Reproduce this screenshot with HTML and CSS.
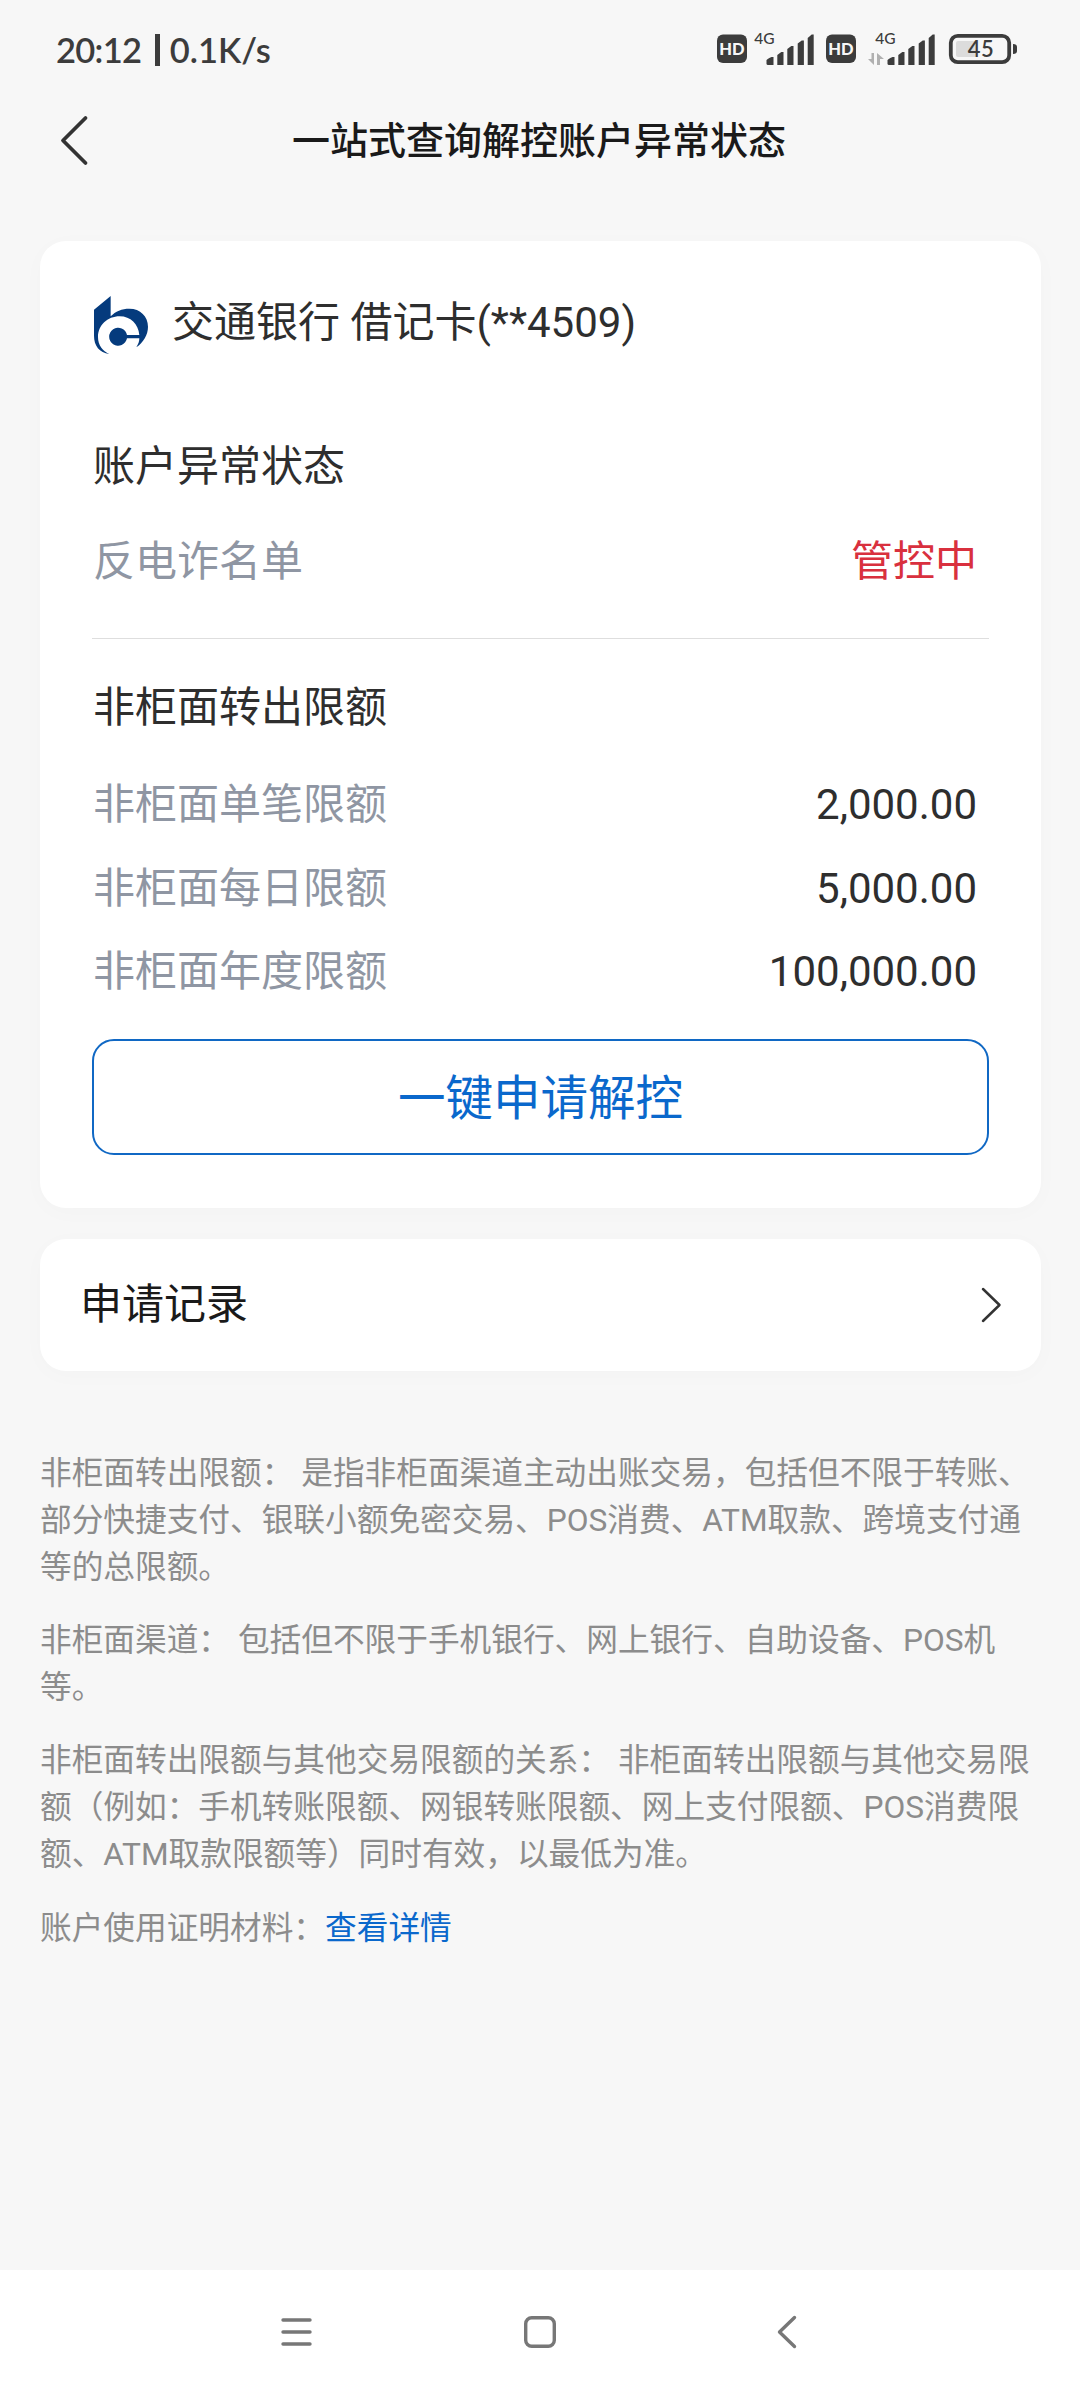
FILE: index.html
```html
<!DOCTYPE html>
<html lang="zh-CN">
<head>
<meta charset="utf-8">
<title>一站式查询解控账户异常状态</title>
<link rel="stylesheet" href="styles.css">
</head>
<body>
<div class="screen">
  <div class="status-bar">
    <div class="status-left"><span class="clock">20:12</span><i class="sep"></i><span class="speed">0.1K/s</span></div>
    <svg class="status-icons" width="310" height="40" viewBox="0 0 310 40">
      <g fill="#3c3c3c">
        <rect x="0" y="4.5" width="30" height="28.5" rx="6"/>
        <rect x="109" y="4.5" width="30" height="28.5" rx="6"/>
        <g id="bars">
          <path d="M49.500 33.500v-3q0-1.500 5-3.500h2v8h-5.500q-1.500 0-1.500-1.500z"/>
          <path d="M60.300 35v-10l4-3h2.200v13z"/>
          <path d="M70.300 35v-16l4-3h2.200v19z"/>
          <path d="M80.700 35v-21.500l4-3h2.200v24.500z"/>
          <path d="M90.700 35v-27l4-3.500h2v30.500z"/>
        </g>
        <use href="#bars" x="121"/>
        <path d="M296 14q4 0 4 3v4q0 3-4 3z"/>
      </g>
      <g class="hd"><text x="15" y="24.500">HD</text><text x="124" y="24.500">HD</text></g>
      <g class="net"><text x="47.500" y="14">4G</text><text x="168.500" y="14">4G</text></g>
      <path d="M157 23v12l-6-6h3.500v-6zM160 35v-12l7 6h-4v6z" fill="#b0b0b0"/>
      <rect x="233.800" y="5.800" width="58.400" height="26.400" rx="7" fill="none" stroke="#3c3c3c" stroke-width="3.800"/>
      <rect x="239" y="11" width="21" height="16" rx="2" fill="#dcdcdc"/>
      <text class="battery" x="264" y="26.700">45</text>
    </svg>
  </div>

  <header class="nav-bar">
    <svg class="back" width="32" height="54" viewBox="0 0 32 54"><path d="M27.500 5L5 27.500l22.500 22.500" fill="none" stroke="#333" stroke-width="3.800" stroke-linecap="round" stroke-linejoin="round"/></svg>
    <h1 class="title">一站式查询解控账户异常状态</h1>
  </header>

  <section class="card account">
    <div class="bank">
      <svg class="bank-logo" width="55" height="58" viewBox="42 47 165 174">
        <path fill="#053b7d" d="M92 47V108C106 93 126 85 148 85C181 85 204 108 204 139C204 163 190 186 169 201C175 191 178 183 178 174H141A27 27 0 1 1 141 164H178C175 132 152 108 119 108C82 108 54 135 54 170C54 194 68 213 88 221C58 217 42 196 42 166V88Z"/>
      </svg>
      <span>交通银行 借记卡(**4509)</span>
    </div>
    <h2 class="section-title">账户异常状态</h2>
    <div class="row"><span class="label">反电诈名单</span><span class="alert">管控中</span></div>
    <hr class="divider">
    <h2 class="section-title">非柜面转出限额</h2>
    <div class="limits">
      <div class="row"><span class="label">非柜面单笔限额</span><span>2,000.00</span></div>
      <div class="row"><span class="label">非柜面每日限额</span><span>5,000.00</span></div>
      <div class="row"><span class="label">非柜面年度限额</span><span>100,000.00</span></div>
    </div>
    <button class="apply" type="button">一键申请解控</button>
  </section>

  <section class="card records">
    <span>申请记录</span>
    <svg width="24" height="40" viewBox="0 0 24 40"><path d="M3 4l16.500 16L3 36" fill="none" stroke="#333" stroke-width="2.500" stroke-linecap="round" stroke-linejoin="round"/></svg>
  </section>

  <div class="notes">
    <p>非柜面转出限额： 是指非柜面渠道主动出账交易，包括但不限于转账、部分快捷支付、银联小额免密交易、POS消费、ATM取款、跨境支付通等的总限额。</p>
    <p>非柜面渠道： 包括但不限于手机银行、网上银行、自助设备、POS机等。</p>
    <p>非柜面转出限额与其他交易限额的关系： 非柜面转出限额与其他交易限额（例如：手机转账限额、网银转账限额、网上支付限额、POS消费限额、ATM取款限额等）同时有效，以最低为准。</p>
    <p>账户使用证明材料：<a class="link">查看详情</a></p>
  </div>

  <footer class="system-nav">
    <svg width="36" height="36" viewBox="0 0 36 36"><path d="M4 6h27M4 18h27M4 30h27"/></svg>
    <svg width="36" height="36" viewBox="0 0 36 36"><rect x="3.700" y="3.700" width="28.600" height="28.600" rx="6"/></svg>
    <svg width="36" height="36" viewBox="0 0 36 36"><path d="M25.500 3.500L10.500 18l15 14.500"/></svg>
  </footer>
</div>
</body>
</html>
```
FILE: styles.css
```css
* { box-sizing: border-box; }
body {
  margin: 0;
  background: #f7f7f7;
  color: #2e2e2e;
  font-family: Roboto, "Noto Sans CJK SC", sans-serif;
  font-size: 42px;
  line-height: 60px;
}
h1, h2, p { margin: 0; font-weight: 400; }
.screen {
  width: 1080px;
  height: 2400px;
  display: flex;
  flex-direction: column;
  overflow: hidden;
}
.status-bar {
  height: 100px;
  padding: 0 53px 0 56px;
  display: flex;
  justify-content: space-between;
  align-items: center;
}
.status-left {
  display: flex;
  align-items: center;
  color: #3c3c3c;
  font: 600 34.500px/44px Lato, sans-serif;
}
.clock { letter-spacing: -0.7px; }
.sep { width: 4.500px; height: 32px; margin: 0 10px 0 14px; background: #3c3c3c; }
.status-icons { display: block; }
.status-icons text { text-anchor: middle; font-family: Lato, sans-serif; }
.hd text { font-size: 16.500px; font-weight: 900; fill: #f6f6f6; }
.net text { font-size: 15.500px; font-weight: 500; fill: #3c3c3c; }
.status-icons .battery { font-size: 22px; font-weight: 600; fill: #3c3c3c; letter-spacing: 0.5px; }

.nav-bar {
  height: 80px;
  padding: 0 60px 0 58px;
  display: grid;
  grid-template-columns: 32px 1fr 32px;
  align-items: center;
}
.title {
  text-align: center;
  font-size: 38px;
  font-weight: 500;
  line-height: 58px;
  padding-top: 1px;
  color: #1a1a1a;
}

.card {
  margin: 0 39.500px 0 40px;
  border-radius: 26px;
  background: #fff;
  box-shadow: 0 4px 24px rgba(0, 0, 0, 0.02);
}
.account {
  height: 967px;
  margin-top: 61px;
  padding: 40px 51.500px 0 52px;
}
.bank { height: 84px; display: flex; align-items: center; gap: 23px; padding-left: 2px; }
.bank-logo { margin-top: 3px; }
.section-title { font-size: 42px; line-height: 60px; padding-left: 1px; margin-top: 72px; }
.row {
  height: 83.500px;
  padding: 0 12px 0 1px;
  display: flex;
  justify-content: space-between;
  align-items: center;
}
.section-title + .row { margin-top: 23px; }
.label { color: #8f96a3; }
.alert { color: #d9303e; }
.divider { height: 1px; margin: 34px 0 0; border: 0; background: #dedede; }
.divider + .section-title { margin-top: 39px; }
.limits { margin-top: 26px; }
.apply {
  display: block;
  width: 100%;
  height: 116px;
  margin-top: 24.500px;
  padding: 4px 0 0;
  border: 2px solid #1068c4;
  border-radius: 22px;
  background: #fff;
  color: #0a68cc;
  font: 400 47.500px/66px Roboto, "Noto Sans CJK SC", sans-serif;
}
.records {
  height: 132px;
  margin-top: 31px;
  padding: 0 37px 0 40px;
  display: flex;
  justify-content: space-between;
  align-items: center;
  color: #1a1a1a;
}
.notes {
  flex: 1;
  padding: 79px 40px 0;
  display: flex;
  flex-direction: column;
  gap: 26.200px;
  font-size: 31.680px;
  line-height: 47px;
  color: #8c8c8c;
}
.link { color: #0a68cc; }
.system-nav {
  height: 130px;
  padding: 0 275px 6px 279px;
  display: flex;
  justify-content: space-between;
  align-items: center;
  background: #fff;
}
.system-nav svg { fill: none; stroke: #777; stroke-width: 3.400; stroke-linecap: round; stroke-linejoin: round; }
.system-nav svg:nth-child(2) { margin-right: 4px; }
```
